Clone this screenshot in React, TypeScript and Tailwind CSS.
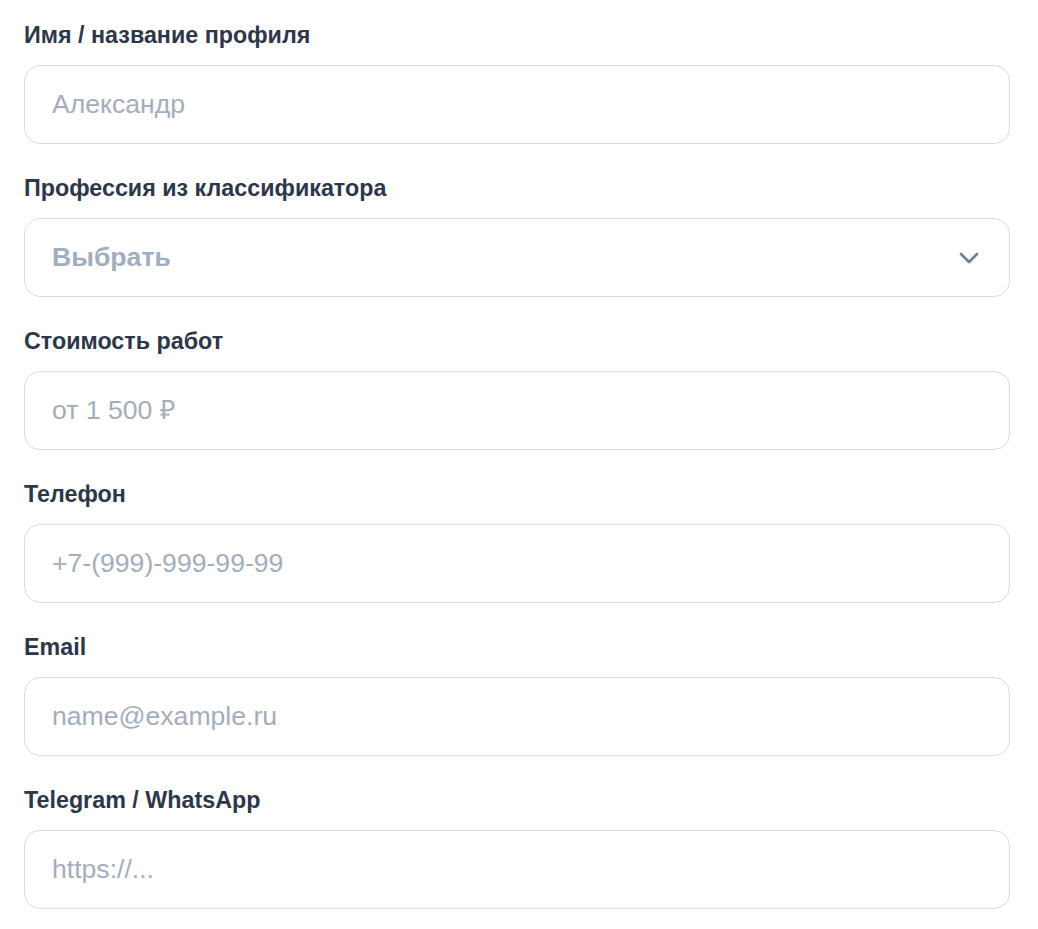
import { ChevronDown } from "lucide-react"

interface FieldProps {
  label: string
  placeholder: string
  type?: string
}

function Field({ label, placeholder, type = "text" }: FieldProps) {
  return (
    <div className="flex flex-col">
      <label className="mb-[15px] text-[23.3px] leading-[30px] font-bold text-[#2d3748]">
        {label}
      </label>
      <input
        type={type}
        placeholder={placeholder}
        className="h-[79px] w-full rounded-2xl border border-[#d5dde8] bg-white px-[27px] text-[26.6px] text-[#2d3748] outline-none placeholder:text-[#a3adbb]"
      />
    </div>
  )
}

export default function App() {
  return (
    <div className="min-h-screen bg-white font-[family-name:'Liberation_Sans',Arial,sans-serif]">
      <div className="box-content flex w-[986px] flex-col gap-[29px] pl-[24px] pt-[20px]">
        <Field label="Имя / название профиля" placeholder="Александр" />

        {/* Select */}
        <div className="flex flex-col">
          <label className="mb-[15px] text-[23.3px] leading-[30px] font-bold text-[#2d3748]">
            Профессия из классификатора
          </label>
          <button className="flex h-[79px] w-full items-center justify-between rounded-2xl border border-[#d5dde8] bg-white pl-[27px] pr-[24px]">
            <span className="text-[26.6px] font-bold text-[#a0aec0]">Выбрать</span>
            <ChevronDown className="h-[32px] w-[32px] text-[#718096]" strokeWidth={2} />
          </button>
        </div>

        <Field label="Стоимость работ" placeholder="от 1 500 ₽" />
        <Field label="Телефон" placeholder="+7-(999)-999-99-99" type="tel" />
        <Field label="Email" placeholder="name@example.ru" type="email" />
        <Field label="Telegram / WhatsApp" placeholder="https://..." />
      </div>
    </div>
  )
}
